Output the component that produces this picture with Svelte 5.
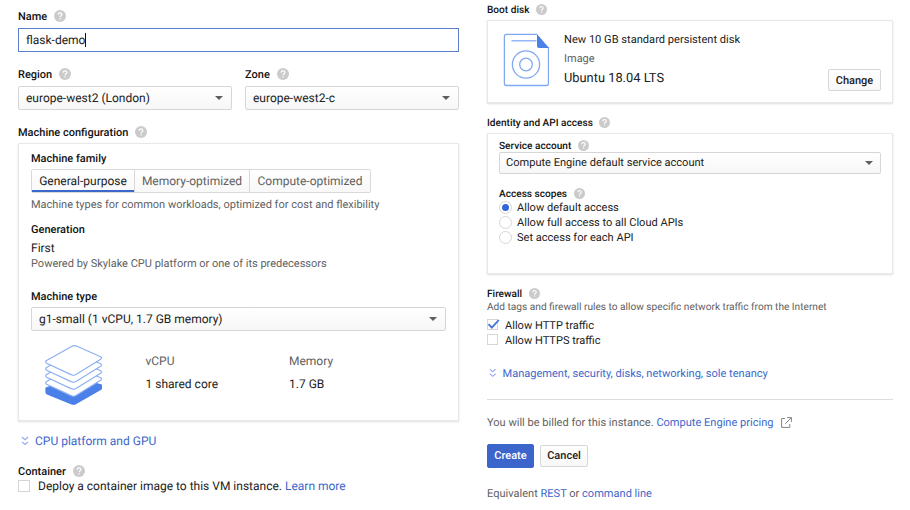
<script>
  const families = ['General-purpose', 'Memory-optimized', 'Compute-optimized'];
  const scopes = ['Allow default access', 'Allow full access to all Cloud APIs', 'Set access for each API'];
  let family = $state(0);
  let scope = $state(0);
</script>

{#snippet help()}
  <svg class="help" viewBox="0 0 12 12">
    <circle cx="6" cy="6" r="6" fill="#cbcbcb" />
    <path d="M4.2 4.7C4.2 3.4 5 2.8 6 2.8s1.9.7 1.9 1.7C7.9 5.8 6.1 5.8 6.1 7.3M6.1 8.2v1.2" fill="none" stroke="#fff" stroke-width="1.2" />
  </svg>
{/snippet}

{#snippet chevrons()}
  <svg class="chevrons" viewBox="0 0 8 10">
    <path d="M1 1l3 2.700L7 1M1 5.800l3 2.700 3-2.700" fill="none" stroke="#8faae8" stroke-width="1.1" />
  </svg>
{/snippet}

<main>
  <section class="left">
    <div class="line label name">Name {@render help()}</div>
    <div class="input"><span>flask-demo</span><i class="caret"></i></div>

    <div class="places">
      <div class="region">
        <div class="line label">Region {@render help()}</div>
        <div class="select"><span>europe-west2 (London)</span><i class="arrow"></i></div>
      </div>
      <div class="zone">
        <div class="line label">Zone {@render help()}</div>
        <div class="select"><span>europe-west2-c</span><i class="arrow"></i></div>
      </div>
    </div>

    <div class="line label config">Machine configuration {@render help()}</div>
    <div class="card machine">
      <div class="line label">Machine family</div>
      <div class="tabs">
        {#each families as name, i}
          <button class="tab" class:active={family === i} onclick={() => (family = i)}>{name}</button>
        {/each}
      </div>
      <div class="line note">Machine types for common workloads, optimized for cost and flexibility</div>
      <div class="line label generation">Generation</div>
      <div class="line first">First</div>
      <div class="line note powered">Powered by Skylake CPU platform or one of its predecessors</div>
      <div class="line label type">Machine type</div>
      <div class="select"><span class="mtype">g1-small (1 vCPU, 1.7 GB memory)</span><i class="arrow"></i></div>
      <div class="specs">
        <svg class="stack" viewBox="0 0 58 60">
          <g stroke-linejoin="round" stroke-width="1.2">
            <path d="M2 43v4.300q0 1 1.200 1.600L27 58.600q2.500 1.200 5 0L56.500 44.500q1-.6 1-1.500v-3L30 32z" fill="#4a80e8" stroke="#4a80e8" />
            {#each [21, 14, 7, 0] as dy}
              <path transform="translate(0 {dy})" d="M2.600 15.600L28 1.200q2.500-1.200 5 0L56.600 11.800q1.800 1.100 0 2.400L32 29.600q-2.500 1.400-5 0L2.600 18.200q-1.800-1.300 0-2.600z" fill="#fff" stroke="#8db0f2" />
            {/each}
          </g>
        </svg>
        <div class="spec cpu"><span class="grey">vCPU</span><span>1 shared core</span></div>
        <div class="spec"><span class="grey">Memory</span><span>1.7 GB</span></div>
      </div>
    </div>

    <div class="line link expand">{@render chevrons()}CPU platform and GPU</div>
    <div class="line label container">Container {@render help()}</div>
    <div class="line option deploy"><i class="check"></i><span>Deploy a container image to this VM instance. <a href="#more">Learn more</a></span></div>
  </section>

  <section class="right">
    <div class="line label boot">Boot disk {@render help()}</div>
    <div class="card disk">
      <svg class="diskicon" viewBox="0 0 46 54">
        <g fill="none" stroke="#82a8f1" stroke-width="1.300">
          <path d="M34 1.400H3.400q-2 0-2 2v47.100q0 2 2 2H43.500q2 0 2-2V14" />
          <path d="M8.500 7.800h25" />
          <circle cx="23" cy="31.500" r="13.600" />
          <circle cx="23" cy="31.500" r="6.300" />
        </g>
        <path d="M34 1L46 15H36q-2 0-2-2z" fill="#4a80e8" />
      </svg>
      <div class="diskinfo">
        <div class="line disksize">New 10 GB standard persistent disk</div>
        <div class="line grey image">Image</div>
        <div class="line ubuntu">Ubuntu 18.04 LTS</div>
      </div>
      <button class="btn change">Change</button>
    </div>

    <div class="line label identity">Identity and API access {@render help()}</div>
    <div class="card access">
      <div class="line label">Service account {@render help()}</div>
      <div class="select account"><span>Compute Engine default service account</span><i class="arrow"></i></div>
      <div class="line label scopes">Access scopes {@render help()}</div>
      <div class="choices">
        {#each scopes as name, i}
          <label class="scope">
            <i class="radio" class:on={scope === i}></i>
            <span>{name}</span>
          </label>
        {/each}
      </div>
    </div>

    <div class="line label firewall">Firewall {@render help()}</div>
    <div class="line tags">Add tags and firewall rules to allow specific network traffic from the Internet</div>
    <div class="line option http">
      <i class="check"><svg viewBox="0 0 13 11"><path d="M1.500 5.200l3.300 3.500L11.800 1" fill="none" stroke="#4272d8" stroke-width="1.800" /></svg></i>
      <span>Allow HTTP traffic</span>
    </div>
    <div class="line option https"><i class="check"></i><span>Allow HTTPS traffic</span></div>
    <div class="line link manage">{@render chevrons()}Management, security, disks, networking, sole tenancy</div>
    <hr />
    <div class="line billed">
      <span>You will be billed for this instance. <a href="#pricing">Compute Engine pricing</a></span>
      <svg class="external" viewBox="0 0 11 11"><path d="M4 1.500H.6v8.900h8.200V7M6 .6h4.400V5M10.300.7L4.200 6.800" fill="none" stroke="#858585" stroke-width="1" /></svg>
    </div>
    <div class="actions">
      <button class="btn create">Create</button>
      <button class="btn cancel">Cancel</button>
    </div>
    <div class="line equivalent"><span>Equivalent <a href="#rest">REST</a> or <a href="#cli">command line</a></span></div>
  </section>
</main>

<style>
  :global(body) { background: #fff; }
  main {
    width: 910px;
    height: 510px;
    display: flex;
    overflow: hidden;
    font: 12px/14px Roboto, sans-serif;
    text-rendering: geometricPrecision;
    color: #212121;
    background: #fff;
    box-sizing: border-box;
    padding-left: 18px;
  }
  main * { box-sizing: border-box; }
  button { font: inherit; text-rendering: inherit; letter-spacing: inherit; color: inherit; padding: 0; margin: 0; }
  a { color: #3b68cb; text-decoration: none; }
  .left { width: 441px; margin-right: 28px; }
  .right { width: 406px; }
  .line { height: 14px; display: flex; align-items: center; white-space: nowrap; }
  .label { font-size: 11px; font-weight: 500; color: #111; padding-top: 2px; }
  .help { width: 12px; height: 12px; margin: -2px 0 0 7px; flex: none; }
  .grey, .note, .tags, .billed, .equivalent { color: #616161; }
  .link { color: #3b68cb; }

  .name { margin-top: 9px; }
  .input {
    height: 24px; margin-top: 5px; border: 1px solid #5b7fce; padding-left: 7px;
    display: flex; align-items: center;
  }
  .caret { width: 1px; height: 14px; background: #111; }
  .places { display: flex; gap: 13px; margin-top: 15px; }
  .region, .zone { width: 214px; }
  .select {
    height: 24px; margin-top: 5px; padding: 0 8px 0 7px; border: 1px solid #d6d6d6; border-radius: 2px;
    background: linear-gradient(#fff, #f7f7f7);
    display: flex; align-items: center; justify-content: space-between; white-space: nowrap;
  }
  .arrow { border: 4px solid transparent; border-top-color: #5f5f5f; border-bottom: 0; }
  .config { margin-top: 15px; }
  .card { background: #fff; border: 1px solid #e8e8e8; box-shadow: 0 1px 2px rgba(0, 0, 0, .13); }
  .machine { height: 278px; margin-top: 4px; padding: 7px 12px 0; }
  .tabs { display: flex; margin-top: 4px; width: 340px; height: 24px; border: 1px solid #d9d9d9; border-radius: 2px; }
  .tab {
    border: 0; border-right: 1px solid #d9d9d9; background: linear-gradient(#fff, #f8f8f8);
    color: #616161; flex: none; width: 115px;
  }
  .tab:first-child { width: 103px; }
  .tab:last-child { width: 120px; border-right: 0; }
  .tab.active { color: #212121; box-shadow: inset 0 -2px #3b68cb; }
  .note { font-size: 11px; margin-top: 4px; padding-top: 2px; }
  .generation { margin-top: 11px; }
  .first { margin-top: 5px; }
  .powered { margin-top: 1px; }
  .type { margin-top: 19px; }
  .machine .select { margin-top: 4px; }
  .specs { display: flex; margin-top: 14px; padding-left: 13px; }
  .stack { width: 58px; height: 60px; }
  .spec { display: flex; flex-direction: column; gap: 9px; padding-top: 9px; white-space: nowrap; }
  .cpu { margin-left: 43.5px; width: 143.5px; }
  .expand { margin-top: 13px; padding-left: 3px; }
  .chevrons { width: 8px; height: 10px; margin-right: 6px; }
  .container { margin-top: 16px; }
  .check { width: 12px; height: 12px; border: 1px solid #d6d6d6; margin-right: 8px; flex: none; }
  .check svg { display: block; width: 13px; height: 11px; margin: -1px; }
  .deploy { margin-top: 1px; }

  .right .label { font-size: 10.1px; }
  .right .help { width: 11px; height: 11px; margin: -3px 0 0 6.5px; }
  .boot { margin-top: 3px; }
  .disk { height: 83px; margin-top: 3px; display: flex; padding: 12px 11px 0 15px; }
  .diskicon { width: 46px; height: 54px; }
  .diskinfo { margin: 0 0 0 15px; flex: 1; }
  .disksize { font-size: 11.1px; }
  .image { margin-top: 5px; font-size: 11px; }
  .ubuntu { margin-top: 6px; font-size: 12.850px; }
  .btn {
    height: 22px; border: 1px solid #d6d6d6; border-radius: 2px; font-size: 11px; font-weight: 500;
    background: linear-gradient(#fff, #f8f8f8); color: #212121;
  }
  .change { width: 53px; margin-top: 36px; padding-top: 1px; }
  .identity { margin-top: 13px; }
  .access { height: 141px; margin-top: 3px; padding: 5px 11px 0; }
  .access .account { height: 22px; margin-top: -1px; padding: 0 7px 0 6px; font-size: 11.050px; }
  .scopes { margin-top: 13px; }
  .choices { margin-top: -1px; }
  .scope { display: flex; align-items: center; height: 15px; font-size: 11.050px; }
  .radio { width: 13px; height: 13px; border-radius: 50%; border: 1px solid #d6d6d6; margin-right: 5px; display: grid; place-items: center; }
  .radio.on::after { content: ''; width: 7px; height: 7px; border-radius: 50%; background: #3367d6; }
  .firewall { margin-top: 13px; }
  .tags { font-size: 10.130px; margin-top: -1px; padding-top: 1px; }
  .http { margin-top: 4px; }
  .https { margin-top: 1px; }
  .http, .https, .manage, .billed, .equivalent { font-size: 11.050px; }
  .right .check { width: 11px; height: 11px; margin: -2px 7px 0 0; }
  .http span, .https span { padding-top: 1px; }
  .manage { margin-top: 19px; padding: 1px 0 0 2px; }
  .right .chevrons { width: 7.500px; margin-top: -2px; }
  hr { margin: 19px 0 0; border: 0; height: 1px; background: #dcdcdc; }
  .billed { margin-top: 16px; }
  .external { width: 11px; height: 11px; margin: -2px 0 0 8px; }
  .actions { display: flex; gap: 6px; align-items: center; margin-top: 14px; }
  .create { width: 47px; height: 24px; color: #fff; background: #3b65cb; border-color: #3b65cb; }
  .cancel { width: 48px; }
  .equivalent { margin-top: 18px; padding-top: 2px; }
</style>
